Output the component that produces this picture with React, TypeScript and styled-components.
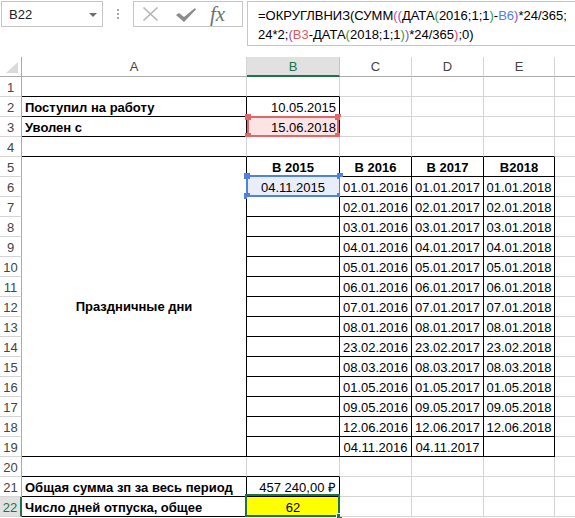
import React from "react";
import styled, { createGlobalStyle, css } from "styled-components";

const GRID_LINE = "#d4d4d4";
const HEADER_LINE = "#ababab";
const BOX_LINE = "#000";
const EXCEL_GREEN = "#217346";
const BOX_GRAY = "#c6c6c6";

type Align = "left" | "center" | "right";
type MarkKind = "red" | "blue" | "select";

interface CellDef {
  text?: string;
  bold?: boolean;
  align?: Align;
  fill?: string;
  mark?: MarkKind;
  span?: number;
}

const COLS = ["A", "B", "C", "D", "E", "F"];
// F is only a sliver at the window edge, its letter lies out of view
const VISIBLE_LABELS = ["A", "B", "C", "D", "E"];
const ROW_COUNT = 22;

const HOLIDAYS = [
  "01.01", "02.01", "03.01", "04.01", "05.01", "06.01", "07.01",
  "08.01", "23.02", "08.03", "01.05", "09.05", "12.06", "04.11",
];

const cells: Record<string, CellDef> = {
  A2: { text: "Поступил на работу", bold: true },
  B2: { text: "10.05.2015", align: "right" },
  A3: { text: "Уволен с", bold: true },
  B3: { text: "15.06.2018", align: "right", mark: "red" },
  A5: { text: "Праздничные дни", bold: true, align: "center", span: 15 },
  B5: { text: "В 2015", bold: true, align: "center" },
  C5: { text: "В 2016", bold: true, align: "center" },
  D5: { text: "В 2017", bold: true, align: "center" },
  E5: { text: "В2018", bold: true, align: "center" },
  B6: { text: "04.11.2015", align: "center", mark: "blue" },
  A21: { text: "Общая сумма зп за весь период", bold: true },
  B21: { text: "457 240,00 ₽", align: "right" },
  A22: { text: "Число дней отпуска, общее", bold: true },
  B22: { text: "62", align: "center", fill: "#ffff00", mark: "select" },
};

HOLIDAYS.forEach((day, i) => {
  const row = 6 + i;
  cells[`C${row}`] = { text: `${day}.2016`, align: "center" };
  cells[`D${row}`] = { text: `${day}.2017`, align: "center" };
  if (day !== "04.11") cells[`E${row}`] = { text: `${day}.2018`, align: "center" };
});

// ranges drawn with thin black borders (column index, row number)
const BOXES = [
  { c0: 0, c1: 1, r0: 2, r1: 3 },
  { c0: 0, c1: 4, r0: 5, r1: 19 },
  { c0: 0, c1: 1, r0: 21, r1: 22 },
];

const boxed = (c: number, r: number) =>
  BOXES.some((b) => c >= b.c0 && c <= b.c1 && r >= b.r0 && r <= b.r1);

const isMergedAway = (c: number, r: number) => c === 0 && r > 5 && r <= 19;

const GlobalStyle = createGlobalStyle`
  html, body {
    margin: 0;
    padding: 0;
    background: #fff;
    overflow: hidden;
  }
  body {
    font-family: "Liberation Sans", Arial, sans-serif;
    color: #000;
  }
`;

const Page = styled.div`
  width: 575px;
  height: 518px;
  overflow: hidden;
  display: flex;
  flex-direction: column;
`;

const TopBar = styled.div`
  display: flex;
  align-items: flex-start;
  height: 46px;
  padding: 1px 0 0 1px;
  box-sizing: border-box;
`;

const NameBox = styled.div`
  box-sizing: border-box;
  width: 102px;
  height: 26px;
  border: 1px solid ${BOX_GRAY};
  display: flex;
  align-items: center;
  justify-content: space-between;
  padding: 0 5px 0 7px;
  font-size: 13px;
  color: #222;
`;

const DropArrow = styled.span`
  width: 0;
  height: 0;
  border-left: 4px solid transparent;
  border-right: 4px solid transparent;
  border-top: 4px solid #6d6d6d;
  margin-top: 1px;
`;

const Grip = styled.div`
  width: 30px;
  height: 26px;
  display: flex;
  flex-direction: column;
  align-items: center;
  justify-content: center;
  gap: 2px;

  span {
    width: 2px;
    height: 2px;
    background: #a6a6a6;
  }
`;

const ButtonBox = styled.div`
  box-sizing: border-box;
  width: 110px;
  height: 26px;
  border: 1px solid ${BOX_GRAY};
  display: flex;
  align-items: center;
  padding-left: 8px;
  gap: 17px;
`;

const Fx = styled.span`
  font-family: "Liberation Serif", "Times New Roman", serif;
  font-style: italic;
  font-size: 21px;
  color: #707070;
  line-height: 20px;
  margin-left: -3px;
  margin-top: -1px;
`;

const FormulaBox = styled.div`
  box-sizing: border-box;
  flex: 1;
  min-width: 0;
  margin-left: 4px;
  margin-right: -4px;
  height: 45px;
  border: 1px solid ${BOX_GRAY};
  padding: 4px 0 0 10px;
  font-size: 13px;
  line-height: 19px;
  white-space: pre;
  overflow: hidden;
`;

const Tok = styled.span<{ $c: string }>`
  color: ${(p) => p.$c};
`;

const Sheet = styled.div`
  margin-top: 11px;
  display: grid;
  grid-template-columns: 22px 225px 93px 72px 72px 71px 64px;
  grid-template-rows: 20px;
  grid-auto-rows: 20px;
  font-size: 13px;
`;

const Corner = styled.div`
  box-sizing: border-box;
  border-right: 1px solid ${HEADER_LINE};
  border-bottom: 1px solid ${HEADER_LINE};
  display: flex;
  align-items: flex-end;
  justify-content: flex-end;
  padding: 0 3px 3px 0;
`;

const ColHeader = styled.div<{ $active: boolean }>`
  box-sizing: border-box;
  display: flex;
  align-items: center;
  justify-content: center;
  line-height: 19px;
  color: #444;
  border-right: 1px solid ${GRID_LINE};
  border-bottom: 1px solid ${HEADER_LINE};
  ${(p) =>
    p.$active &&
    css`
      background: #e1e1e1;
      color: ${EXCEL_GREEN};
      border-bottom: 2px solid ${EXCEL_GREEN};
      border-right-color: #c6c6c6;
    `}
`;

const RowHeader = styled.div<{ $active: boolean }>`
  box-sizing: border-box;
  display: flex;
  align-items: flex-end;
  justify-content: center;
  padding-bottom: 1px;
  line-height: 15px;
  color: #444;
  border-right: 1px solid ${HEADER_LINE};
  border-bottom: 1px solid ${GRID_LINE};
  ${(p) =>
    p.$active &&
    css`
      background: #e1e1e1;
      color: ${EXCEL_GREEN};
      border-right: 2px solid ${EXCEL_GREEN};
    `}
`;

const Cell = styled.div<{
  $right: boolean;
  $bottom: boolean;
  $align: Align;
  $bold: boolean;
  $fill?: string;
  $span?: number;
}>`
  position: relative;
  box-sizing: border-box;
  display: flex;
  align-items: ${(p) => (p.$span ? "center" : "flex-end")};
  justify-content: ${(p) =>
    p.$align === "left" ? "flex-start" : p.$align === "right" ? "flex-end" : "center"};
  padding: 0 3px 1px;
  line-height: 15px;
  white-space: nowrap;
  font-weight: ${(p) => (p.$bold ? 700 : 400)};
  background: ${(p) => p.$fill ?? "#fff"};
  border-right: 1px solid ${(p) => (p.$right ? BOX_LINE : GRID_LINE)};
  border-bottom: 1px solid ${(p) => (p.$bottom ? BOX_LINE : GRID_LINE)};
  ${(p) =>
    p.$span &&
    css`
      grid-row: span ${p.$span};
    `}
`;

const CellText = styled.span`
  position: relative;
  z-index: 1;
`;

const MARK_STYLE: Record<MarkKind, { line: string; fill: string }> = {
  red: { line: "#e06868", fill: "#fce4e4" },
  blue: { line: "#5080e0", fill: "#e8eefa" },
  select: { line: EXCEL_GREEN, fill: "transparent" },
};

const Mark = styled.span<{ $kind: MarkKind }>`
  position: absolute;
  z-index: 0;
  border: 2px solid ${(p) => MARK_STYLE[p.$kind].line};
  background: ${(p) => MARK_STYLE[p.$kind].fill};
  ${(p) =>
    p.$kind === "red"
      ? css`
          top: -1px;
          left: 0;
          right: 0;
          bottom: -1px;
        `
      : p.$kind === "blue"
      ? css`
          top: -2px;
          left: -1px;
          right: -2px;
          bottom: -1px;
        `
      : css`
          top: -3px;
          left: -2px;
          right: -1px;
          bottom: -1px;
        `}
`;

const Handle = styled.span<{ $color: string; $v: "top" | "bottom"; $h: "left" | "right" }>`
  position: absolute;
  width: 6px;
  height: 6px;
  background: ${(p) => p.$color};
  ${(p) => p.$v}: -4px;
  ${(p) => p.$h}: -4px;
`;

const FillHandle = styled.span`
  position: absolute;
  width: 5px;
  height: 5px;
  background: ${EXCEL_GREEN};
  border: 1px solid #fff;
  right: -5px;
  bottom: -5px;
`;

const CellMark = ({ kind }: { kind: MarkKind }) => {
  const color = MARK_STYLE[kind].line;
  if (kind === "select") {
    return (
      <Mark $kind={kind}>
        <FillHandle />
      </Mark>
    );
  }
  return (
    <Mark $kind={kind}>
      <Handle $color={color} $v="top" $h="left" />
      <Handle $color={color} $v="top" $h="right" />
      <Handle $color={color} $v="bottom" $h="left" />
      <Handle $color={color} $v="bottom" $h="right" />
    </Mark>
  );
};

const PAREN_2 = "#e0457b";
const PAREN_3 = "#8a4fc9";
const PAREN_4 = "#2e9e48";
const REF_B6 = "#4f7fdc";
const REF_B3 = "#e05a5a";

const FormulaText = () => (
  <FormulaBox>
    <div>
      =ОКРУГЛВНИЗ(СУММ<Tok $c={PAREN_2}>(</Tok>
      <Tok $c={PAREN_3}>(</Tok>ДАТА<Tok $c={PAREN_4}>(</Tok>2016;1;1<Tok $c={PAREN_4}>)</Tok>-
      <Tok $c={REF_B6}>B6</Tok>
      <Tok $c={PAREN_3}>)</Tok>*24/365;
    </div>
    <div>
      24*2;<Tok $c={PAREN_3}>(</Tok>
      <Tok $c={REF_B3}>B3</Tok>-ДАТА<Tok $c={PAREN_4}>(</Tok>2018;1;1<Tok $c={PAREN_4}>)</Tok>
      <Tok $c={PAREN_3}>)</Tok>*24/365<Tok $c={PAREN_2}>)</Tok>;0)
    </div>
  </FormulaBox>
);

export default function App() {
  const rows = Array.from({ length: ROW_COUNT }, (_, i) => i + 1);

  return (
    <Page>
      <GlobalStyle />
      <TopBar>
        <NameBox>
          B22
          <DropArrow />
        </NameBox>
        <Grip>
          <span />
          <span />
          <span />
        </Grip>
        <ButtonBox>
          <svg width="17" height="16" viewBox="0 0 17 16">
            <path d="M1.5 1.5 L15.5 14.5 M15.5 1.5 L1.5 14.5" stroke="#b4b4b4" strokeWidth="1.6" fill="none" />
          </svg>
          <svg width="20" height="14" viewBox="0 0 20 14" style={{ marginTop: 2 }}>
            <polygon points="0,7 3,5 8,9 19,0 20,1.5 8,14" fill="#8c8c8c" />
          </svg>
          <Fx>fx</Fx>
        </ButtonBox>
        <FormulaText />
      </TopBar>

      <Sheet>
        <Corner>
          <svg width="12" height="11" viewBox="0 0 12 11">
            <polygon points="12,0 12,11 0,11" fill="#dadada" />
          </svg>
        </Corner>
        {COLS.map((c) => (
          <ColHeader key={c} $active={c === "B"}>
            {VISIBLE_LABELS.includes(c) ? c : null}
          </ColHeader>
        ))}
        {rows.map((r) => (
          <React.Fragment key={r}>
            <RowHeader $active={r === 22}>{r}</RowHeader>
            {COLS.map((c, ci) => {
              if (isMergedAway(ci, r)) return null;
              const def = cells[`${c}${r}`] ?? {};
              const lastRow = def.span ? r + def.span - 1 : r;
              return (
                <Cell
                  key={c}
                  $right={boxed(ci, r) || boxed(ci + 1, r)}
                  $bottom={boxed(ci, lastRow) || boxed(ci, lastRow + 1)}
                  $align={def.align ?? "left"}
                  $bold={!!def.bold}
                  $fill={def.fill}
                  $span={def.span}
                >
                  {def.mark && <CellMark kind={def.mark} />}
                  {def.text && <CellText>{def.text}</CellText>}
                </Cell>
              );
            })}
          </React.Fragment>
        ))}
      </Sheet>
    </Page>
  );
}
